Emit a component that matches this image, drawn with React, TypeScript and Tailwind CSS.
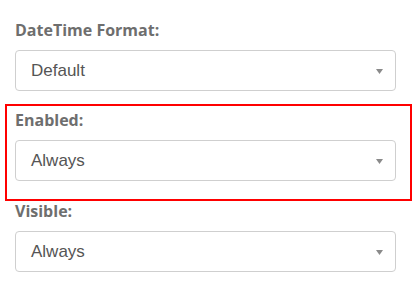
function Caret() {
  return (
    <svg width="7" height="5" viewBox="0 0 7 5" className="absolute right-[12px] top-[18px]">
      <path d="M0 0 L7 0 L3.5 5 Z" fill="#8a8a8a" />
    </svg>
  )
}

function Field({ label, value }: { label: string; value: string }) {
  return (
    <div>
      <div className="text-[16px] leading-[22px] font-bold text-[#6e6e6e] font-['Open_Sans',sans-serif]">{label}</div>
      <div className="relative mt-[9px] h-[41px] w-[381px] rounded-[4px] border border-[#cfcfcf] bg-white pl-[15px] flex items-center text-[17px] text-[#555555] font-['Liberation_Sans',Arial,sans-serif]">
        {value}
        <Caret />
      </div>
    </div>
  )
}

export default function App() {
  return (
    <div className="w-[415px] h-[298px] bg-white overflow-hidden pt-[19px] pl-[15px]">
      <Field label="DateTime Format:" value="Default" />
      <div className="-ml-[10px] mt-[13px] w-[407px] border-2 border-[#ff0000] pt-[3px] pb-[18px] pl-[8px]">
        <Field label="Enabled:" value="Always" />
      </div>
      <div className="-mt-[1px]">
        <Field label="Visible:" value="Always" />
      </div>
    </div>
  )
}
